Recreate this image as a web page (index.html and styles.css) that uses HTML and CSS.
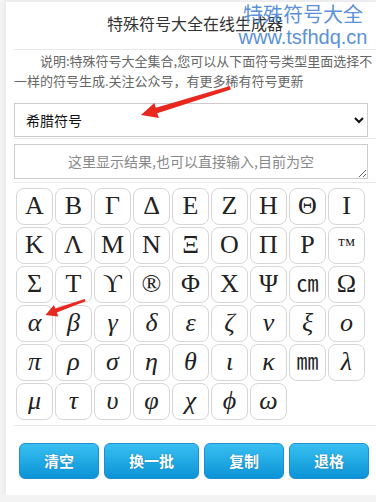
FILE: index.html
```html
<!DOCTYPE html>
<html lang="zh-CN">
<head>
  <meta charset="UTF-8">
  <meta name="viewport" content="width=device-width, initial-scale=1">
  <title>特殊符号大全在线生成器</title>
  <link rel="stylesheet" href="styles.css">
</head>
<body>
  <div class="panel">
    <div class="header">
      <h1>特殊符号大全在线生成器</h1>
    </div>

    <p class="desc">说明:特殊符号大全集合,您可以从下面符号类型里面选择不一样的符号生成.关注公众号，有更多稀有符号更新</p>

    <div class="section sel-row">
      <select id="type">
        <option>希腊符号</option>
        <option>数学符号</option>
        <option>单位符号</option>
      </select>
    </div>

    <div class="section out-row">
      <textarea id="output" placeholder="这里显示结果,也可以直接输入,目前为空"></textarea>
    </div>

    <!-- symbol grid -->
    <div class="section grid">
      <span class="sym">Α</span><span class="sym">Β</span><span class="sym">Γ</span>
      <span class="sym">Δ</span><span class="sym">Ε</span><span class="sym">Ζ</span>
      <span class="sym">Η</span><span class="sym">Θ</span><span class="sym">Ι</span>
      <span class="sym">Κ</span><span class="sym">Λ</span><span class="sym">Μ</span>
      <span class="sym">Ν</span><span class="sym">Ξ</span><span class="sym">Ο</span>
      <span class="sym">Π</span><span class="sym">Ρ</span><span class="sym small">™</span>
      <span class="sym">Σ</span><span class="sym">Τ</span><span class="sym">ϒ</span>
      <span class="sym">®</span><span class="sym">Φ</span><span class="sym">Χ</span>
      <span class="sym">Ψ</span><span class="sym unit">㎝</span><span class="sym">Ω</span>
      <span class="sym it">α</span><span class="sym it">β</span><span class="sym it">γ</span>
      <span class="sym it">δ</span><span class="sym it">ε</span><span class="sym it">ζ</span>
      <span class="sym it">ν</span><span class="sym it">ξ</span><span class="sym it">ο</span>
      <span class="sym it">π</span><span class="sym it">ρ</span><span class="sym it">σ</span>
      <span class="sym it">η</span><span class="sym it">θ</span><span class="sym it">ι</span>
      <span class="sym it">κ</span><span class="sym unit">㎜</span><span class="sym it">λ</span>
      <span class="sym it">μ</span><span class="sym it">τ</span><span class="sym it">υ</span>
      <span class="sym it">φ</span><span class="sym it">χ</span><span class="sym it">ϕ</span>
      <span class="sym it">ω</span>
    </div>

    <div class="actions">
      <button type="button">清空</button>
      <button type="button">换一批</button>
      <button type="button">复制</button>
      <button type="button">退格</button>
    </div>
  </div>

  <!-- site watermark -->
  <div class="mark">
    <div class="mark-cn">特殊符号大全</div>
    <div class="mark-url">www.tsfhdq.cn</div>
  </div>

  <!-- red hint arrows -->
  <svg class="arrows" width="376" height="502" viewBox="0 0 376 502">
    <polygon fill="#e8281e" points="141,115 154.3,103 155.8,107.8 230,86 230.8,89.4 157.2,113.2 159,118"/>
    <polygon fill="#e8281e" points="45.5,315 53.9,305 55.4,308.6 84.6,299 85.6,301.2 56.8,312.4 58.3,316.6"/>
  </svg>
</body>
</html>
```

FILE: styles.css
```css
* { box-sizing: border-box; }

body {
  margin: 0;
  padding: 2px 0 0 6px;
  background: #f3f3f3;
  font-family: "Noto Sans CJK SC", "Liberation Sans", sans-serif;
  color: #333;
  position: relative;
  overflow: hidden;
}

.panel {
  background: #fff;
  box-shadow: 0 0 6px rgba(0, 0, 0, 0.08);
  padding: 0 0 16px 8px;
}

.header {
  height: 48px;
  border-bottom: 1px solid #e8e8e8;
  padding-top: 10px;
}

h1 {
  margin: 0;
  font-size: 16px;
  font-weight: normal;
  line-height: 22px;
  text-align: center;
  color: #333;
}

.desc {
  margin: 0;
  padding-top: 1px;
  font-size: 13px;
  line-height: 20px;
  text-indent: 26px;
  color: #666;
}

.section {
  border-bottom: 1px solid #e8e8e8;
}

.sel-row {
  padding: 12px 0 1px;
}

select {
  display: block;
  width: 354px;
  height: 34px;
  padding: 0 7px;
  border: 1px solid #ccc;
  border-radius: 0;
  background: #fff;
  font-family: "Noto Sans CJK SC", sans-serif;
  font-size: 14px;
  color: #111;
  outline: none;
}

.out-row {
  padding: 5px 0 3px;
}

textarea {
  display: block;
  width: 354px;
  height: 35px;
  padding: 6px 8px;
  border: 1px solid #ccc;
  font-family: "Noto Sans CJK SC", sans-serif;
  font-size: 14px;
  line-height: 20px;
  text-align: center;
  color: #333;
  outline: none;
}

textarea::placeholder { color: #888; }

.grid {
  display: grid;
  grid-template-columns: repeat(9, 37px);
  grid-auto-rows: 37px;
  gap: 2px;
  padding: 5px 0 5px 2px;
}

.sym {
  display: flex;
  align-items: center;
  justify-content: center;
  border: 1px solid #d6d6d6;
  border-radius: 8px;
  background: #fff;
  font-family: "Liberation Serif", "DejaVu Serif", serif;
  font-size: 26px;
  line-height: 1;
  color: #222;
  padding-bottom: 2px;
  cursor: pointer;
}

.sym.it { font-style: italic; }
.sym.small { font-size: 18px; }
.sym.unit { font-size: 22px; font-family: "Liberation Serif", "Noto Sans CJK SC", serif; }

.actions {
  display: flex;
  gap: 5px;
  padding: 17px 0 0 5px;
}

.actions button {
  flex: none;
  white-space: nowrap;
  height: 36px;
  padding: 0 24px;
  border: 1px solid #1b8fd2;
  border-radius: 6px;
  background: linear-gradient(#38c0f2, #0b93d6);
  color: #fff;
  font-family: "Noto Sans CJK SC", sans-serif;
  font-size: 15px;
  font-weight: bold;
  line-height: 20px;
  text-shadow: 0 0 1px rgba(0, 60, 110, 0.6);
  cursor: pointer;
}

.mark {
  position: absolute;
  top: 1px;
  left: 236px;
  width: 134px;
  text-align: center;
  color: #4a86d4;
  opacity: 0.9;
}

.mark-cn {
  font-size: 20px;
  line-height: 25px;
}

.mark-url {
  font-family: "Liberation Sans", sans-serif;
  font-size: 20px;
  line-height: 22px;
}

.arrows {
  position: absolute;
  top: 0;
  left: 0;
  pointer-events: none;
}
```
